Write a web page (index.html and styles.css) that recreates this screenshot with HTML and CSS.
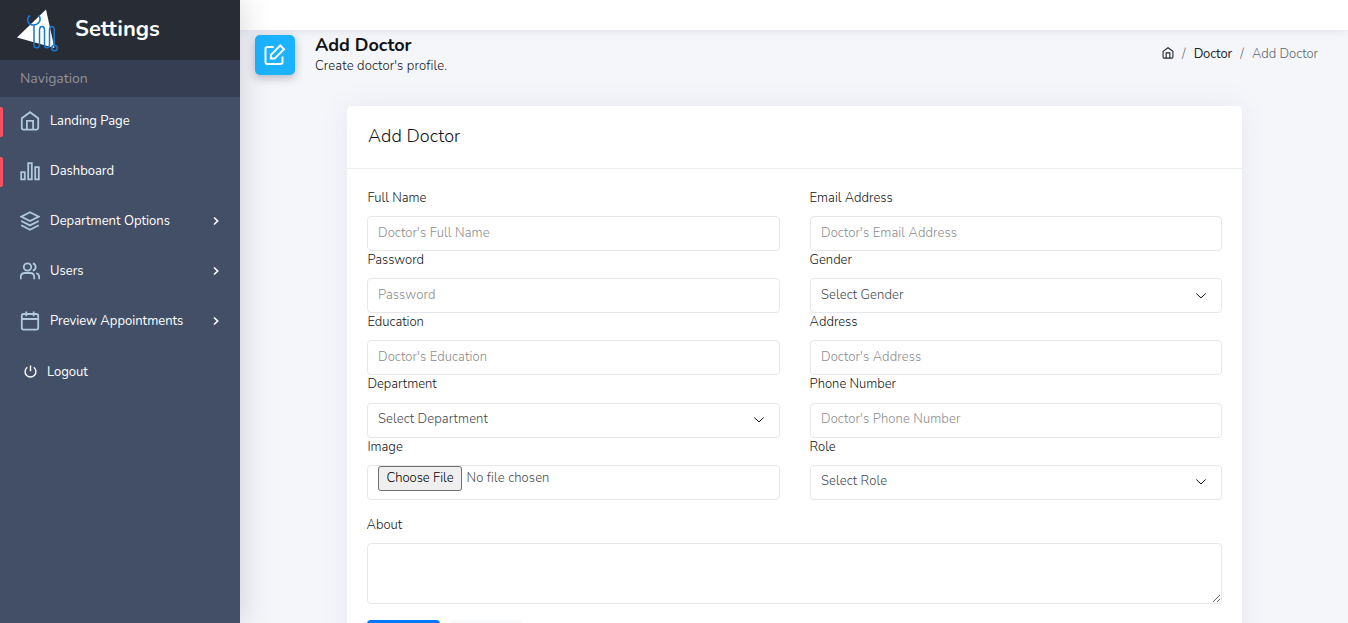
FILE: index.html
```html
<!DOCTYPE html>
<html lang="en">
<head>
<meta charset="utf-8">
<title>Add Doctor</title>
<link rel="stylesheet" href="styles.css">
</head>
<body>
<svg class="defs" width="0" height="0">
  <symbol id="home" viewBox="0 0 20 20"><path d="M1.800 7.300 10 1.200l8.200 6.100v9.500a1.800 1.800 0 0 1-1.800 1.800H3.600a1.800 1.800 0 0 1-1.800-1.800zM6.900 18.400V9.800h6.200v8.600"/></symbol>
  <symbol id="chev" viewBox="0 0 10 10"><path d="M3 1.500 6.700 5 3 8.500"/></symbol>
  <symbol id="down" viewBox="0 0 12 8"><path d="m1.300 1.500 4.700 4.400 4.700-4.400"/></symbol>
</svg>
<div class="app">
  <aside class="sidebar">
    <div class="brand">
      <svg class="logo" width="44" height="44" viewBox="0 0 44 44">
        <path d="M30 1.500 38.500 40 1 29.500z" fill="#fff" stroke="none"/>
        <g fill="none" stroke="#1b78cd" stroke-width="1.500"><path d="M14.500 8.200h-1.700c-2.600 4.500-.5 8.800 4.700 8.800s8-4.500 5.900-8.800h-1.700M18 17v20c0 3.800 5.500 3.800 5.500 0V22c0-4.800 5-4.800 5 0v15c0 3.800 5 3.800 5 0V22c0-4.800 4.700-4.800 4.700 0v15"/><circle cx="38.500" cy="40" r="2.800"/></g>
      </svg>
      <span class="brand-name">Settings</span>
    </div>
    <div class="nav-title">Navigation</div>
    <nav class="nav">
      <a class="item marked"><svg class="ico" viewBox="0 0 20 20"><use href="#home"/></svg><span>Landing Page</span></a>
      <a class="item marked"><svg class="ico" viewBox="0 0 20 20"><path d="M1.200 11.200h3.600v7.200H1.200zM8.200 2.200h3.600v16.200H8.200zM15.200 6.200h3.600v12.200h-3.600z"/></svg><span>Dashboard</span></a>
      <a class="item"><svg class="ico" viewBox="0 0 20 20"><path d="m10 1.200 8.800 4.400L10 10 1.200 5.600zM1.200 10l8.800 4.400 8.800-4.400M1.200 14.300l8.800 4.400 8.800-4.400"/></svg><span>Department Options</span><svg class="arrow"><use href="#chev"/></svg></a>
      <a class="item"><svg class="ico" viewBox="0 0 20 20"><circle cx="7.500" cy="6" r="3.700"/><path d="M.8 18.200V16c0-2.500 1.700-4 4-4h5.400c2.300 0 4 1.500 4 4v2.200M12.800 2.400a3.700 3.700 0 0 1 0 7.200M16.200 12.200c2 .5 3 1.900 3 3.800v2.200"/></svg><span>Users</span><svg class="arrow"><use href="#chev"/></svg></a>
      <a class="item"><svg class="ico" viewBox="0 0 20 20"><rect x="1.800" y="3" width="16.400" height="15.600" rx="1.800"/><path d="M1.800 8h16.400M6.300.6v4.600M13.700.6v4.600"/></svg><span>Preview Appointments</span><svg class="arrow"><use href="#chev"/></svg></a>
      <a class="item logout"><svg class="power" viewBox="0 0 12 12"><path d="M6 .4v5.400M3 2.100a5 5 0 1 0 6 0"/></svg><span>Logout</span></a>
    </nav>
  </aside>
  <main class="main">
    <div class="topbar"></div>
    <header class="page-head">
      <div class="page-icon"><svg width="22" height="22" viewBox="0 0 22 22"><path d="M9.700 3H3.200A1.700 1.700 0 0 0 1.500 4.700v13.600A1.700 1.700 0 0 0 3.200 20h13.600a1.700 1.700 0 0 0 1.700-1.700v-5.700M16.300 1.500l3.700 3.700-9.400 9.400H6.900v-3.700z"/></svg></div>
      <div class="page-text"><h1>Add Doctor</h1><p>Create doctor's profile.</p></div>
      <div class="crumbs"><svg class="crumb-home" viewBox="0 0 20 20"><use href="#home"/></svg><i>/</i><a>Doctor</a><i>/</i><span>Add Doctor</span></div>
    </header>
    <section class="card">
      <h2>Add Doctor</h2>
      <form class="body">
        <div class="grid">
          <div class="field"><label>Full Name</label><input placeholder="Doctor's Full Name"></div>
          <div class="field"><label>Email Address</label><input placeholder="Doctor's Email Address"></div>
          <div class="field"><label>Password</label><input placeholder="Password"></div>
          <div class="field"><label>Gender</label><div class="select"><span>Select Gender</span><svg><use href="#down"/></svg></div></div>
          <div class="field"><label>Education</label><input placeholder="Doctor's Education"></div>
          <div class="field"><label>Address</label><input placeholder="Doctor's Address"></div>
          <div class="field"><label>Department</label><div class="select"><span>Select Department</span><svg><use href="#down"/></svg></div></div>
          <div class="field"><label>Phone Number</label><input placeholder="Doctor's Phone Number"></div>
          <div class="field"><label>Image</label><div class="file"><button type="button">Choose File</button><span>No file chosen</span></div></div>
          <div class="field"><label>Role</label><div class="select"><span>Select Role</span><svg><use href="#down"/></svg></div></div>
        </div>
        <div class="field about"><label>About</label><textarea></textarea></div>
        <div class="actions"><span class="btn primary"></span><span class="btn light"></span></div>
      </form>
    </section>
  </main>
</div>
</body>
</html>
```
FILE: styles.css
```css
* { box-sizing: border-box; }
body { margin: 0; height: 623px; overflow: hidden; font: 300 13px/21px Nunito, Lato, sans-serif; color: #121416; background: #f5f6fa; }
svg { fill: none; stroke: currentColor; flex: none; }
.defs { display: block; position: absolute; }
.app { display: flex; height: 623px; overflow: hidden; }
.sidebar { width: 240px; flex: none; background: #424f67; color: #fff; font-weight: 400; position: relative; z-index: 2; box-shadow: 0 0 30px rgba(40, 40, 60, .2); }
.brand { height: 60px; background: #272c35; display: flex; align-items: center; padding-left: 16px; }
.brand-name { font-size: 22px; font-weight: 700; margin-left: 15px; line-height: 30px; padding-bottom: 3px; }
.nav-title { height: 37px; line-height: 37px; padding-left: 20px; background: #353e53; color: #929294; font-size: 14px; }
.item { height: 50px; display: flex; align-items: center; padding: 0 20px; position: relative; }
.item span { margin-left: 10px; padding-bottom: 1px; }
.ico { width: 20px; height: 20px; stroke: #b2c8dc; stroke-width: 1.8; margin-top: -2px; }
.marked::before { content: ""; position: absolute; left: 0; top: 10px; width: 3px; height: 30px; background: #f55260; border-radius: 0 2px 2px 0; }
.arrow { width: 10px; height: 10px; margin: -2px -1px 0 auto; stroke-width: 1.6; }
.power { width: 13px; height: 13px; margin: -2px 0 0 4px; stroke-width: 1.3; }
.item.logout span { padding: 1px 0 0; }
.main { flex: 1; display: flex; flex-direction: column; min-width: 0; }
.topbar { height: 30px; flex: none; background: #fff; box-shadow: 0 0 12px rgba(40, 50, 80, .12); }
.page-head { height: 76px; flex: none; display: flex; align-items: flex-start; padding: 5px 30px 0 15px; }
.page-icon { width: 40px; height: 40px; border-radius: 5px; background: #1bb3ff; color: #fff; display: flex; align-items: center; justify-content: center; stroke-width: 2; box-shadow: 0 3px 10px rgba(30, 40, 60, .3); }
.page-text { margin-left: 20px; }
h1 { margin: 0; font-size: 18px; line-height: 20px; font-weight: 700; }
p { margin: 0; line-height: 23px; letter-spacing: .13px; }
.crumbs { margin-left: auto; padding-top: 8px; display: flex; align-items: center; line-height: 23px; color: #5c656d; }
.crumbs i { font-style: normal; width: 20px; text-align: center; }
.crumbs a { color: #212529; font-weight: 400; letter-spacing: -.15px; }
.crumb-home { width: 12px; height: 12px; margin-top: -3px; color: #212529; stroke-width: 1.8; }
.card { width: 895px; margin-left: 107px; height: 620px; flex: none; background: #fff; border-radius: 5px; box-shadow: 0 0 30px rgba(60, 60, 110, .07); }
h2 { margin: 0; height: 63px; padding: 19px 21px; font-size: 18px; line-height: 22px; font-weight: 300; letter-spacing: .1px; border-bottom: 1px solid #ecedef; }
.body { padding: 17.800px 20px; }
.grid { display: grid; grid-template-columns: 413px 412px; gap: 0 30px; }
.field { height: 62.200px; }
label { display: block; height: 29.300px; line-height: 23px; padding-left: .4px; }
.field:nth-child(even) label { padding-left: 0; margin-left: -.4px; }
.field input, .select, .file { display: flex; width: 100%; height: 35px; border: 1px solid #e6e7ea; border-radius: 4px; padding: 0 10px 1px; font: inherit; color: #3f474e; background: #fff; align-items: center; outline: 0; letter-spacing: .11px; }
.field input { padding-bottom: 1.700px; }
.field input::placeholder { color: #8b8b8b; opacity: 1; }
.select svg { width: 12px; height: 8px; margin: 1px 4px 0 auto; color: #111; stroke-width: 1; }
.file { align-items: flex-start; }
.file button { width: 84px; height: 25px; font: inherit; line-height: 21px; padding: 0; border: 1px solid #707070; border-radius: 3px; background: #efefef; color: #000; white-space: nowrap; }
.file span { margin: 2px 0 0 4.500px; }
.about { margin-top: 16px; height: auto; }
textarea { display: block; width: 855px; height: 61px; border: 1px solid #e6e7ea; border-radius: 4px; resize: vertical; }
.actions { display: flex; gap: 10px; padding-top: 16px; }
.btn { width: 73px; height: 35px; border-radius: 4px; background: #007bff; }
.light { width: 72px; background: #f8f9fa; }
```
